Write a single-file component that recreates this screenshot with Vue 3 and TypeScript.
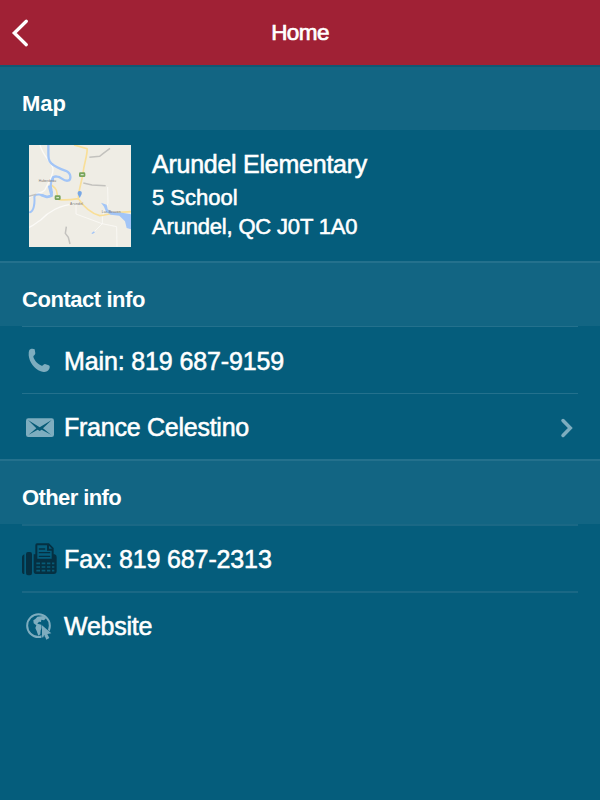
<script setup lang="ts">
interface Row {
  icon: 'phone' | 'mail' | 'fax' | 'web'
  label: string
  chevron?: boolean
}
interface Section {
  id: string
  title: string
  rows: Row[]
}

const address = { name: 'Arundel Elementary', street: '5 School', city: 'Arundel, QC J0T 1A0' }

const sections: Section[] = [
  {
    id: 'contact',
    title: 'Contact info',
    rows: [
      { icon: 'phone', label: 'Main: 819 687-9159' },
      { icon: 'mail', label: 'France Celestino', chevron: true },
    ],
  },
  {
    id: 'other',
    title: 'Other info',
    rows: [
      { icon: 'fax', label: 'Fax: 819 687-2313' },
      { icon: 'web', label: 'Website' },
    ],
  },
]
</script>

<template>
  <div class="screen">
    <header class="bar">
      <svg class="back" viewBox="0 0 18 30"><path d="M15.3 3.2 3.3 15l12 11.7" /></svg>
      <h1>Home</h1>
    </header>

    <h2 class="heading first">Map</h2>
    <section class="place">
      <svg class="map" viewBox="27 29 306 306">
        <rect x="27" y="29" width="306" height="306" fill="#efede5" />
        <g fill="none" stroke="#fbfaf7" stroke-width="4">
          <path d="M60 29C70 65 92 75 99 100C101 120 86 140 74 165C64 175 48 172 28 186" />
          <path d="M167 207C122 205 82 233 63 253C48 264 37 273 27 276" />
          <path d="M168 207V236L246 265L290 274L291 334M263 155L264 204L247 244V265L220 292" stroke-width="2.500" />
        </g>
        <path d="M162 29L201 40C204 52 193 83 190 107C187 136 176 159 175 190C148 194 128 195 116 192C108 184 116 169 105 158L91 146M175 190C190 214 215 235 239 241C264 239 280 229 333 229" fill="none" stroke="#f9df98" stroke-width="5" />
        <g fill="none" stroke="#a2c5f7" stroke-linecap="round" stroke-linejoin="round">
          <path d="M85 29C86 62 82 72 94 84C108 97 124 102 139 107C155 115 154 135 143 136C130 138 123 124 112 124C101 122 97 126 99 134" stroke-width="7" />
          <path d="M99 126C88 145 93 156 95 165C99 178 89 188 78 184C65 177 46 174 43 184C45 205 41 228 30 231" stroke-width="6" />
          <path d="M88 154L95 181L81 185L65 180" stroke-width="8" />
        </g>
        <path d="M243 202L260 208L263 222L276 230L306 232L333 237V282L320 278L315 258L298 241L272 238L258 229L252 214ZM214 294L222 288L225 291L218 296Z" fill="#a2c5f7" />
        <g fill="none" stroke="#c3c2be" stroke-width="4.500">
          <path d="M208 66L239 63L250 54L270 39M190 143L216 149L257 151M139 274L136 294L145 306L150 326M27 183L49 177" />
        </g>
        <g fill="#77a45c"><rect x="177" y="111" width="19" height="14" rx="4" /><rect x="104" y="180" width="18" height="14" rx="4" /></g>
        <path d="M182 118h9M109 187h8" stroke="#d6e4ca" stroke-width="4" />
        <path d="M179 188L173 176Q172 167 179 167Q187 167 185 176Z" fill="#77a7e6" />
        <g class="names"><text x="56" y="141" textLength="52">Huberdeau</text><text x="150" y="210" textLength="39">Arundel</text><text x="245" y="234" textLength="57">Lac-Beaven</text></g>
      </svg>
      <div class="address">
        <div class="name">{{ address.name }}</div>
        <div class="line">{{ address.street }}</div>
        <div class="line city">{{ address.city }}</div>
      </div>
    </section>

    <template v-for="section in sections" :key="section.id">
      <h2 class="heading" :class="section.id">{{ section.title }}</h2>
      <ul class="rows" :class="section.id">
        <li v-for="row in section.rows" :key="row.label" class="row" :class="row.icon">
          <svg v-if="row.icon === 'phone'" class="icon" viewBox="36 10 108 108">
            <path d="M58 31C62 26 70 26 74 29L76 41C76 46 70 48 70 51C73 63 84 73 95 78C99 79 101 73 105 73L116 77C120 79 120 83 118 87C113 97 103 99 92 95C73 88 58 68 56 47Q55 37 58 31Z" />
          </svg>
          <svg v-else-if="row.icon === 'mail'" class="icon" viewBox="36 207 108 108">
            <rect x="48" y="232" width="84" height="56" rx="7" />
            <path class="cut" d="M54 237L89 259L125 237L99 262L123 281L95 266L89 270L83 266L56 281L79 262Z" />
          </svg>
          <svg v-else-if="row.icon === 'fax'" class="icon dark" viewBox="36 35 108 108">
            <path d="M43 72V131C38 131 36 128 36 124V79Q37 74 43 72ZM54 65H60Q66 65 66 72V128Q66 135 60 135H54Q48 135 48 128V72Q48 65 54 65ZM71 72H76V45Q76 39 81 39H117L131 53V72H134Q140 74 140 80V122Q140 131 131 131H77Q71 130 71 124ZM82 45V85H125V61H111V45ZM117 46V55H126Z" fill-rule="evenodd" />
            <path d="M88 56H104M88 67H119M88 78H119" stroke="#053042" stroke-width="4" stroke-linecap="round" />
            <path d="M79 99H90M95 99H106M111 99H121M126 99H133M79 110H90M95 110H106M111 110H121M126 110H133M79 121H90M95 121H106M111 121H121M126 121H133" stroke="#075b77" stroke-width="5" />
          </svg>
          <svg v-else class="icon" viewBox="36 233 108 108">
            <circle cx="85.500" cy="286" r="34" fill="none" stroke="#7eadbf" stroke-width="6" />
            <path d="M76 266L82 259L100 257L108 264L102 270L94 268L93 275L87 274L82 280L94 283L97 290L92 300L91 312L85 316L80 302L76 293L79 285L71 279L70 270Z" />
            <path d="M96 285L124 309L112 311L118 323L109 328L103 314L96 322Z" stroke="#055d7c" stroke-width="3" paint-order="stroke" />
          </svg>
          <span class="label">{{ row.label }}</span>
          <svg v-if="row.chevron" class="chevron" viewBox="0 0 14 20"><path d="M3 2.500 10.300 10 3 17.500" /></svg>
        </li>
      </ul>
    </template>
  </div>
</template>

<style>
body {
  background: #055d7c;
}
</style>

<style scoped>
.screen {
  width: 600px;
  min-height: 800px;
  background: #055d7c;
  color: #fff;
  font-family: 'Liberation Sans', Arial, sans-serif;
}
.bar {
  height: 65px;
  box-sizing: border-box;
  background: #a02135;
  display: grid;
  grid-template-columns: 40px 1fr 40px;
  align-items: center;
  padding-top: 1px;
}
.back {
  width: 18px;
  height: 30px;
  margin-left: 11px;
  fill: none;
  stroke: #fff;
  stroke-width: 3.300;
  stroke-linecap: round;
}
h1 {
  margin: 0;
  text-align: center;
  font-size: 22.500px;
  font-weight: 400;
  letter-spacing: -0.6px;
  -webkit-text-stroke: 0.7px #fff;
}
.heading {
  margin: 0;
  height: 65px;
  box-sizing: border-box;
  padding: 12px 22px 0;
  border-top: 2px solid #24718d;
  background: #126583;
  font-size: 22px;
  line-height: 50px;
  font-weight: 700;
  letter-spacing: -0.45px;
}
.heading.first {
  border-top-color: #105774;
  letter-spacing: 0;
}
.heading.other {
  letter-spacing: -0.6px;
}
.place {
  height: 131px;
  box-sizing: border-box;
  display: flex;
  gap: 21px;
  padding: 15px 29px 0;
}
.map {
  width: 102px;
  height: 102px;
}
.names {
  font-size: 10px;
  fill: #77736c;
}
.address {
  -webkit-text-stroke: 0.55px #fff;
}
.name {
  font-size: 25px;
  line-height: 38px;
  letter-spacing: -0.25px;
}
.line {
  font-size: 22px;
  line-height: 29px;
}
.city {
  letter-spacing: -0.18px;
}
.rows {
  margin: 0;
  padding: 0 22px;
  list-style: none;
}
.row {
  height: 66.500px;
  box-sizing: border-box;
  border-top: 1px solid #24718d;
  display: flex;
  align-items: center;
  padding-top: 3px;
}
.other .row {
  border-top: 2px solid #1a6885;
}
.icon {
  width: 36px;
  height: 36px;
  flex: none;
  margin-right: 6px;
  fill: #7eadbf;
}
.dark {
  fill: #053042;
}
.cut {
  fill: #075b77;
}
.label {
  flex: 1;
  font-size: 25px;
  letter-spacing: -0.13px;
  -webkit-text-stroke: 0.55px #fff;
}
.mail .label,
.web .label {
  letter-spacing: -0.25px;
}
.chevron {
  width: 14px;
  height: 20px;
  margin-right: 4px;
  fill: none;
  stroke: #7eadbf;
  stroke-width: 3.500;
  stroke-linecap: round;
}
</style>
